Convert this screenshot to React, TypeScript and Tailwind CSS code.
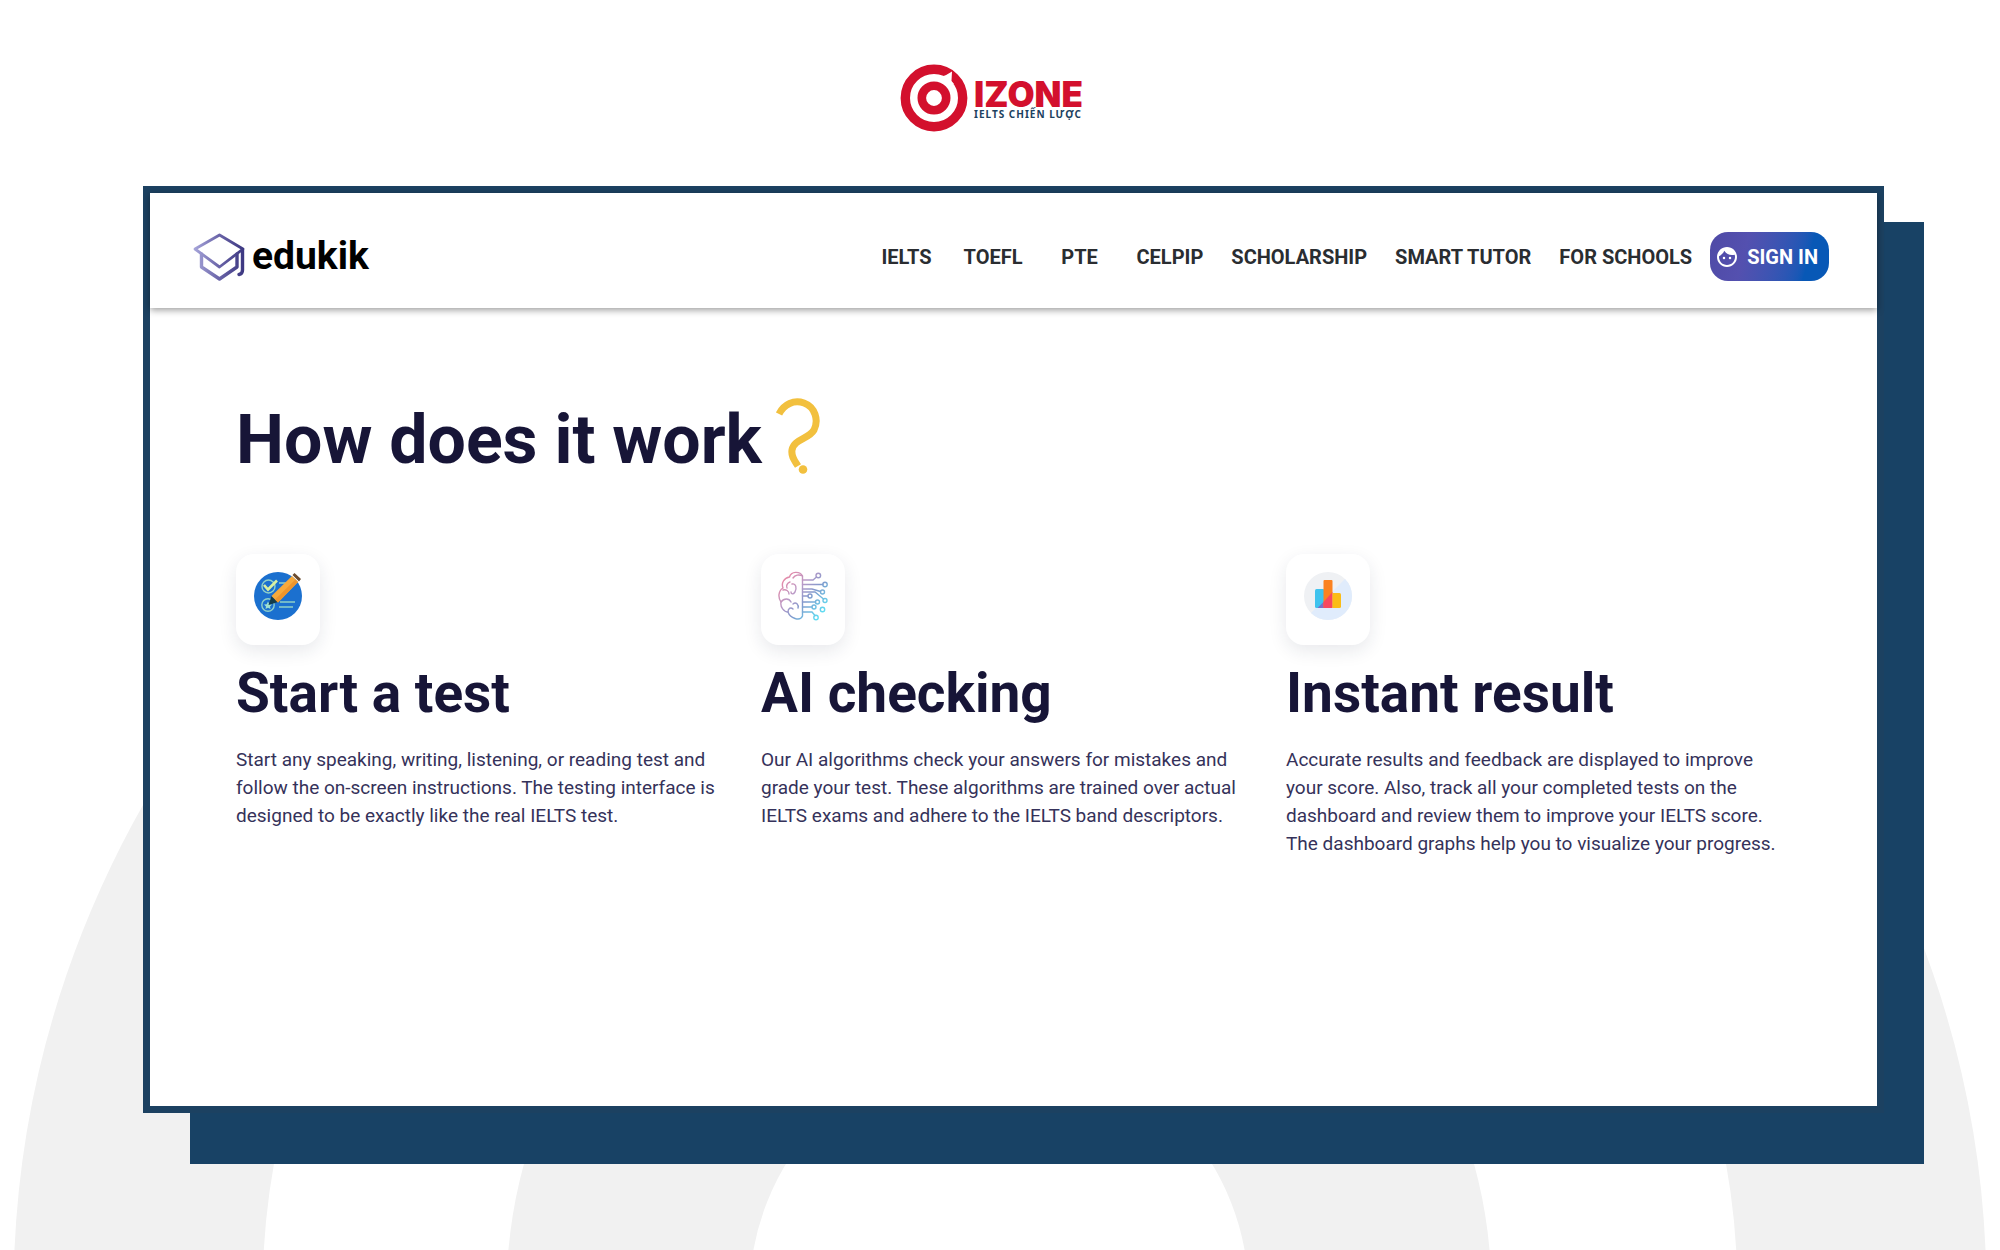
import { MdFace } from "react-icons/md";

const navLinks = [
  "IELTS",
  "TOEFL",
  "PTE",
  "CELPIP",
  "SCHOLARSHIP",
  "SMART TUTOR",
  "FOR SCHOOLS",
];

// Large target rings behind the page
const BackgroundRings = () => (
  <svg
    className="absolute inset-0 h-full w-full"
    viewBox="0 0 2000 1250"
    preserveAspectRatio="xMidYMax slice"
    fill="none"
    stroke="#f1f1f1"
    aria-hidden="true"
  >
    <circle cx="1000" cy="1294" r="862" strokeWidth="249" />
    <circle cx="999" cy="1294" r="371" strokeWidth="243" />
  </svg>
);

const IzoneMark = () => (
  <svg className="size-[68px]" viewBox="0 0 68 68" aria-hidden="true">
    <circle cx="34" cy="34" r="28.7" fill="none" stroke="#d3102d" strokeWidth="9.4" />
    <circle cx="34" cy="34" r="12.2" fill="none" stroke="#d3102d" strokeWidth="8.6" />
    <path d="M41 13 Q47 11 52 7.5 L51.5 17 L54 20 L49 20 Z" fill="#fff" />
  </svg>
);

const EdukikMark = () => (
  <svg className="h-12 w-[52px]" viewBox="0 0 52 48" fill="none" aria-hidden="true">
    <defs>
      <linearGradient id="cap" x1="0" y1="0" x2="52" y2="0" gradientUnits="userSpaceOnUse">
        <stop stopColor="#a9a8dc" />
        <stop offset="0.5" stopColor="#6a64a8" />
        <stop offset="1" stopColor="#3a357f" />
      </linearGradient>
    </defs>
    <g stroke="url(#cap)" strokeWidth="2.8" strokeLinejoin="round" strokeLinecap="round">
      <path d="M2 16 L26.5 2 L50 16 L26.5 34 Z" />
      <path d="M8.5 21 V34 L26.500 46 L44 34 V21" strokeWidth="3.4" />
      <path d="M49.500 17 V37 Q49.500 41 46 41.500" strokeWidth="3.4" />
    </g>
  </svg>
);

const QuestionMark = () => (
  <svg className="h-[76px] w-11" viewBox="0 0 44 76" fill="none" aria-hidden="true">
    <path
      d="M3 16 C8 6 18 1.500 28 5 C39 9 43 22 38 32 C33 41 18 41 16 52 C15 59 19 63 22 68"
      stroke="#f2c03e"
      strokeWidth="7"
    />
    <circle cx="27" cy="71.500" r="4.300" fill="#f2c03e" />
  </svg>
);

const TestIcon = () => (
  <svg className="size-[50px] overflow-visible" viewBox="0 0 50 50" fill="none" aria-hidden="true">
    <circle cx="25" cy="25" r="24" fill="#1b70cf" />
    <g stroke="#8fd0c8" strokeWidth="1.400">
      <circle cx="15.500" cy="15.500" r="6.500" />
      <circle cx="15" cy="34" r="6.200" />
      <path d="M26 12 H34 M27 31 H42 M26 36 H40" />
    </g>
    <path d="M11 14 L15 18.500 L24 9.500" stroke="#d9f0a0" strokeWidth="2.600" />
    <path d="M15 30.500 L16.300 33.200 L19 33.500 L17 35.500 L17.500 38 L15 36.700 L12.500 38 L13 35.500 L11 33.500 L13.700 33.200 Z" fill="#9fe0d0" />
    <path d="M15.500 34 L18.500 25 L25 31 Z" fill="#143c4a" />
    <path d="M18.500 25 L39 5 L45 11 L25 31.500 Z" fill="#f7a93b" />
    <path d="M22 28.500 L42.500 8.500 L45 11 L25 31.500 Z" fill="#ee952c" />
    <path d="M39.500 4 L41.500 2 L48 8 L46 10.500 Z" fill="#6b4a2d" />
  </svg>
);

const BrainIcon = () => (
  <svg className="size-[50px]" viewBox="0 0 50 50" fill="none" aria-hidden="true">
    <defs>
      <linearGradient id="brain" x1="6" y1="8" x2="44" y2="42" gradientUnits="userSpaceOnUse">
        <stop stopColor="#e58aa8" />
        <stop offset="0.350" stopColor="#b79ac8" />
        <stop offset="0.600" stopColor="#8299cc" />
        <stop offset="1" stopColor="#5fdcf2" />
      </linearGradient>
    </defs>
    <g stroke="url(#brain)" strokeWidth="1.400" strokeLinecap="round">
      <path d="M24.500 5 C22 0 13 0 11.500 6 C6 7 3 12 5 17 C0 20 0 27 3 31 C2 36 6 41 10 41 C12 47 22 51 24.500 45 Z" />
      <path d="M24.500 5 C21 3 17 4 15 7 M12 11 C9 12 8 15 9 17 M14 13 C18 12 19 17 17 21 C15 24 13 23 13 21 M5 19 C8 18 11 20 11 23 M3 31 C6 27 11 27 13 31 M15 33 C18 30 21 34 20 37 M10 41 C10 37 13 36 15 38" />
      <path d="M24.500 9 H35 L38.500 6 M24.500 13.500 H45 M24.500 18 H34 L42.500 20.500 M24.500 21 H37 L45.500 28 M24.500 25 H30 M24.500 31 H37.500 M24.500 36 H34 M24.500 41 H34 L37 44.500" />
      <circle cx="40.300" cy="4.500" r="2.300" />
      <circle cx="47" cy="13.500" r="2.200" />
      <circle cx="44.500" cy="21" r="2" />
      <circle cx="32" cy="25" r="2" />
      <circle cx="47" cy="29.500" r="2" />
      <circle cx="39.500" cy="31" r="2" />
      <circle cx="36" cy="36" r="2" />
      <circle cx="44.500" cy="38.500" r="2.200" />
      <circle cx="38" cy="46.500" r="2.200" />
    </g>
  </svg>
);

const ResultIcon = () => (
  <svg className="size-[50px]" viewBox="0 0 50 50" aria-hidden="true">
    <circle cx="25" cy="25" r="24" fill="#eff1f4" />
    <path d="M42 8 A24 24 0 0 1 8 42 Z" fill="#e0ecfc" />
    <rect x="12" y="18" width="9.500" height="19" rx="1.500" fill="#3fc3ee" />
    <path d="M14.500 37 L21.500 30 V37 Z" fill="#7a6fc8" />
    <rect x="20.500" y="9" width="9" height="28" rx="1" fill="#fb8220" />
    <path d="M20.500 31 L29.500 21 V37 H20.500 Z" fill="#f8485e" />
    <path d="M29.500 22 H36.500 Q38 22 38 23.500 V35.500 Q38 37 36.500 37 H29.500 Z" fill="#fbbc16" />
  </svg>
);

const steps = [
  {
    icon: <TestIcon />,
    title: "Start a test",
    text: "Start any speaking, writing, listening, or reading test and follow the on-screen instructions. The testing interface is designed to be exactly like the real IELTS test.",
  },
  {
    icon: <BrainIcon />,
    title: "AI checking",
    text: "Our AI algorithms check your answers for mistakes and grade your test. These algorithms are trained over actual IELTS exams and adhere to the IELTS band descriptors.",
  },
  {
    icon: <ResultIcon />,
    title: "Instant result",
    text: "Accurate results and feedback are displayed to improve your score. Also, track all your completed tests on the dashboard and review them to improve your IELTS score. The dashboard graphs help you to visualize your progress.",
  },
];

const App = () => {
  return (
    <div className="relative flex min-h-screen flex-col overflow-hidden bg-white pr-[116px] pl-[143px] font-['Roboto',sans-serif]">
      <BackgroundRings />

      {/* Brand */}
      <div className="relative flex h-[186px] items-start justify-center gap-[6px] pt-16 pr-11">
        <IzoneMark />
        <div className="pt-4">
          <p className="font-['Inter',sans-serif] text-[35px] leading-7 font-black text-[#d3102d]">
            IZONE
          </p>
          <p className="font-['Noto_Sans',sans-serif] text-[10px] leading-3 font-bold tracking-widest text-[#1c4260]">
            IELTS CHIẾN LƯỢC
          </p>
        </div>
      </div>

      {/* Framed page with its offset backdrop */}
      <div className="relative mb-[137px] flex flex-1 flex-col">
        <div className="absolute top-9 -right-10 -bottom-[51px] left-[47px] bg-[#184265]" />
        <div className="relative flex flex-1 flex-col border-[7px] border-[#1c4161] bg-white">
          {/* Header */}
          <header className="flex items-center justify-between pt-[39px] pr-12 pb-[27px] pl-[43px] shadow-[0_2px_7px_rgba(0,0,0,0.4)]">
            <a href="#" className="flex items-center gap-[7px]">
              <EdukikMark />
              <span className="pb-[2px] text-[39px] leading-[46px] font-bold text-black">
                edukik
              </span>
            </a>
            <div className="flex items-center gap-[6px]">
              <nav className="flex items-center gap-1">
                {navLinks.map((link) => (
                  <a
                    key={link}
                    href="#"
                    className="min-w-[82px] px-3 text-center text-[20px] leading-6 font-bold text-[#2a2d31]"
                  >
                    {link}
                  </a>
                ))}
              </nav>
              <button className="flex h-[49px] items-center gap-2 rounded-[18px] bg-linear-105 from-[#4f4aa6] via-[#5450af] via-30% to-[#0858b6] to-80% pr-[11px] pl-[5px] text-[20px] font-bold text-white">
                <MdFace className="size-6" />
                SIGN IN
              </button>
            </div>
          </header>

          {/* How it works */}
          <main className="pt-[90px] pr-[98px] pb-10 pl-[86px] text-[#171537]">
            <div className="flex items-start gap-[14px]">
              <h1 className="pt-[2px] text-[68px] leading-[80px] font-bold">
                How does it work
              </h1>
              <QuestionMark />
            </div>

            <div className="mt-[74px] grid grid-cols-3 gap-8">
              {steps.map((step) => (
                <section key={step.title}>
                  <div className="flex h-[91px] w-[84px] justify-center rounded-[18px] bg-white pt-[17px] shadow-[0_6px_18px_rgba(30,40,70,0.1)]">
                    {step.icon}
                  </div>
                  <h2 className="mt-4 text-[55px] leading-[64px] font-bold">{step.title}</h2>
                  <p className="mt-[21px] text-[19px] leading-7 text-[#35325a]">{step.text}</p>
                </section>
              ))}
            </div>
          </main>
        </div>
      </div>
    </div>
  );
};

export default App;
